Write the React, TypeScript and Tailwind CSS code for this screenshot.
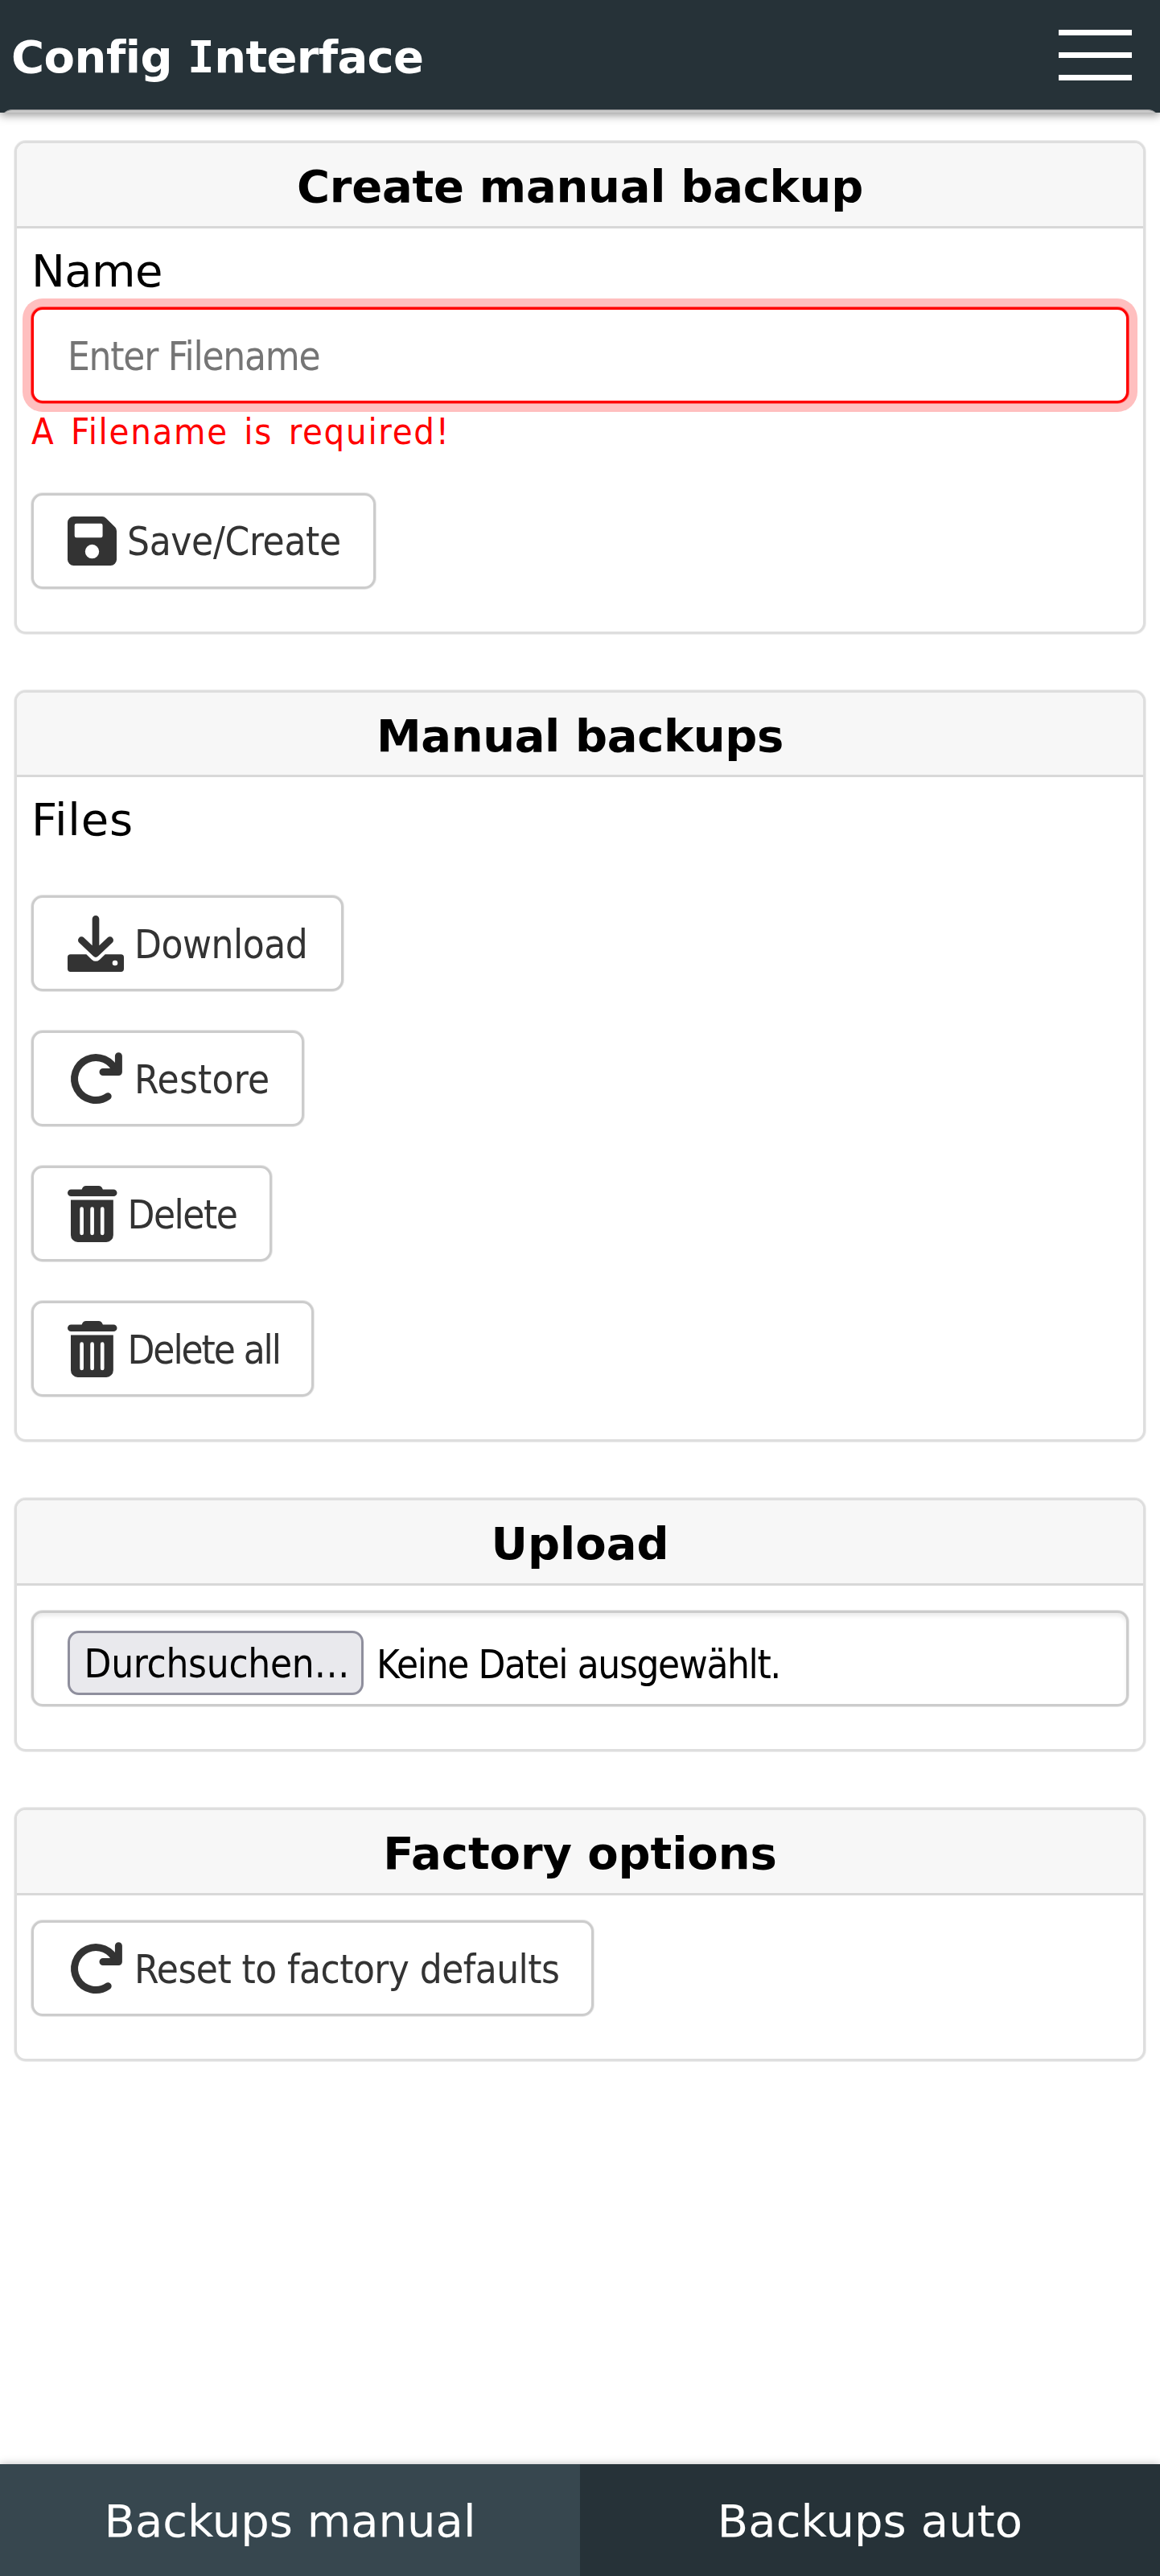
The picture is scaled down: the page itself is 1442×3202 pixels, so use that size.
import type { ReactNode } from "react";

function SaveIcon() {
  return (
    <svg className="h-[61px] w-[61px] shrink-0" viewBox="0 32 448 448" fill="currentColor" fillRule="evenodd">
      <path d="M434 130 350 46A48 48 0 0 0 316 32H56A56 56 0 0 0 0 88v336a56 56 0 0 0 56 56h336a56 56 0 0 0 56-56V164a48 48 0 0 0-14-34zM224 416a64 64 0 1 1 0-128 64 64 0 0 1 0 128zM80 96h224a16 16 0 0 1 16 16v96a16 16 0 0 1-16 16H80a16 16 0 0 1-16-16v-96a16 16 0 0 1 16-16z" />
    </svg>
  );
}

function DownloadIcon() {
  return (
    <svg className="h-[70px] w-[70px] shrink-0" viewBox="0 0 210 210">
      <path
        d="M105 13V135M52 92l53 50 53-50"
        fill="none"
        stroke="currentColor"
        strokeWidth="26"
        strokeLinecap="round"
        strokeLinejoin="round"
      />
      <path
        fill="currentColor"
        fillRule="evenodd"
        d="M11 145H70L90 164Q105 177 120 164L140 145H199a11 11 0 0 1 11 11v43a11 11 0 0 1-11 11H11a11 11 0 0 1-11-11v-43a11 11 0 0 1 11-11zM177 167a10 10 0 1 0 0 20 10 10 0 0 0 0-20z"
      />
    </svg>
  );
}

function RotateIcon() {
  return (
    <svg className="h-[70px] w-[70px] shrink-0" viewBox="0 0 70 70" fill="none" stroke="currentColor" strokeWidth="9">
      <path d="M50.2 56.8A26.5 26.5 0 1 1 60.2 26.5" strokeLinecap="round" />
      <path d="M44 26.5H63.4V6.7" strokeLinecap="round" strokeLinejoin="round" />
      <path d="M55 20l8 7v0h-8z" fill="currentColor" strokeWidth="1" />
    </svg>
  );
}

function TrashIcon() {
  return (
    <svg className="h-[70px] w-[61.5px] shrink-0" viewBox="0 0 185 210" fill="currentColor" fillRule="evenodd">
      <path d="M13 13H53Q58 0 69 0H116Q127 0 132 13H172a13 13 0 0 1 0 26H13a13 13 0 0 1 0-26z" />
      <path d="M12 52H171V184a26 26 0 0 1-26 26H38a26 26 0 0 1-26-26zM46 86v91a7 7 0 0 0 14 0V86a7 7 0 0 0-14 0zM85 86v91a7 7 0 0 0 14 0V86a7 7 0 0 0-14 0zM123 86v91a7 7 0 0 0 14 0V86a7 7 0 0 0-14 0z" />
    </svg>
  );
}

function Card({ title, tracking, children }: { title: string; tracking: string; children: ReactNode }) {
  return (
    <section className="overflow-hidden rounded-[14px] border-[3px] border-[#dedede] bg-white shadow-[0_0_0_1px_rgba(222,222,222,0.5)]">
      <h2
        className={
          "flex h-[105.5px] items-center justify-center border-b-[3px] border-[#d8d8d8] bg-[#f7f7f7] pt-[6px] text-[56px] leading-[66px] font-bold " +
          tracking
        }
      >
        {title}
      </h2>
      <div className="flex flex-col items-start px-[18px] pb-[53px]">{children}</div>
    </section>
  );
}

function ActionButton({ icon, label, className }: { icon: ReactNode; label: string; className: string }) {
  return (
    <button
      type="button"
      className={
        "flex h-[119px] items-center gap-[13px] rounded-[14px] border-[3px] border-[#ccc] bg-white pl-[42px] text-[49px] leading-[58px] whitespace-nowrap text-[#333] shadow-[0_0_0_1px_rgba(204,204,204,0.45)] font-['DejaVu_Sans_Condensed','DejaVu_Sans',sans-serif] " +
        className
      }
    >
      {icon}
      <span className="pt-[4px]">{label}</span>
    </button>
  );
}

export default function App() {
  return (
    <div className="flex min-h-[3202px] flex-col overflow-hidden bg-white text-black font-['DejaVu_Sans',Verdana,sans-serif]">
      <header className="relative flex h-[140px] items-start justify-between bg-[#263238] pr-[35px] pl-[14px] shadow-[0_3px_11px_rgba(0,0,0,0.42)]">
        <h1 className="pt-[38px] text-[56px] leading-[66px] font-bold tracking-[-0.5px] whitespace-pre text-white">
          Config <span className="font-['DejaVu_Sans_Mono',monospace]">I</span>
          <span className="tracking-[-0.7px]">nterface</span>
        </h1>
        <button type="button" aria-label="Menu" className="mt-[37px] flex w-[91px] flex-col gap-[21px]">
          <span className="h-[7px] w-full bg-white" />
          <span className="h-[7px] w-full bg-white" />
          <span className="h-[7px] w-full bg-white" />
        </button>
        <div className="absolute inset-x-0 bottom-0 h-[4px] overflow-hidden">
          <div className="mx-px h-[40px] rounded-[14px] border-t border-[#8f9294] bg-[#c8c8c8]" />
        </div>
      </header>

      <main className="flex flex-col gap-[70px] px-[18px] pt-[35px]">
        <Card title="Create manual backup" tracking="tracking-[-0.27px]">
          <label className="mt-[21px] text-[56px] leading-[63px] tracking-[-0.6px]">Name</label>
          <input
            placeholder="Enter Filename"
            className="mt-[14px] h-[119px] w-full rounded-[14px] border-[3px] border-[#f00] bg-white px-[42px] pt-[4px] text-[49px] tracking-[-1.24px] shadow-[0_0_0_1px_#ff6060,0_0_0_11px_#ffbfbf] outline-none placeholder:text-[#757575] font-['DejaVu_Sans_Condensed','DejaVu_Sans',sans-serif]"
          />
          <p className="mt-[9px] text-[45px] leading-[54px] tracking-[1.7px] [word-spacing:5px] text-[#f00] font-['DejaVu_Sans_Condensed','DejaVu_Sans',sans-serif]">
            A Filename is required!
          </p>
          <ActionButton icon={<SaveIcon />} label="Save/Create" className="mt-[49px] w-[428px] tracking-[-0.33px]" />
        </Card>

        <Card title="Manual backups" tracking="tracking-[-0.38px]">
          <label className="mt-[21px] text-[56px] leading-[63px] tracking-[0.8px]">Files</label>
          <div className="mt-[63px] flex flex-col items-start gap-[49px]">
            <ActionButton icon={<DownloadIcon />} label="Download" className="w-[388px] tracking-[-0.5px]" />
            <ActionButton icon={<RotateIcon />} label="Restore" className="w-[339px] tracking-[0.2px]" />
            <ActionButton icon={<TrashIcon />} label="Delete" className="w-[299px] tracking-[-1.5px]" />
            <ActionButton icon={<TrashIcon />} label="Delete all" className="w-[351px] tracking-[-2.1px]" />
          </div>
        </Card>

        <Card title="Upload" tracking="tracking-normal">
          <div className="mt-[31.5px] flex h-[119px] w-full items-start rounded-[14px] border-[3px] border-[#ccc] bg-white pt-[22px] pl-[42px] text-[49px] leading-[58px] whitespace-nowrap shadow-[0_0_0_1px_rgba(204,204,204,0.45),inset_0_4px_4px_rgba(0,0,0,0.075)] font-['DejaVu_Sans_Condensed','DejaVu_Sans',sans-serif]">
            <button
              type="button"
              className="h-[80px] w-[368px] rounded-[14px] border-[3px] border-[#8f8f9d] bg-[#e9e9ed] pt-[4px] pl-[17.5px] text-left tracking-[-0.3px]"
            >
              Durchsuchen…
            </button>
            <span className="pt-[14px] pl-[16px] tracking-[-1.4px]">Keine Datei ausgewählt.</span>
          </div>
        </Card>

        <Card title="Factory options" tracking="tracking-[-0.1px]">
          <ActionButton
            icon={<RotateIcon />}
            label="Reset to factory defaults"
            className="mt-[31.5px] w-[699px] tracking-[-0.56px]"
          />
        </Card>
      </main>

      <nav className="mt-auto grid h-[139px] grid-cols-2 bg-[#263238] text-center text-[56px] leading-[66px] text-white shadow-[0_0_10px_rgba(0,0,0,0.25)]">
        <a className="bg-[#37474f] pt-[38px]">Backups manual</a>
        <a className="pt-[38px] tracking-[0.1px]">Backups auto</a>
      </nav>
    </div>
  );
}
